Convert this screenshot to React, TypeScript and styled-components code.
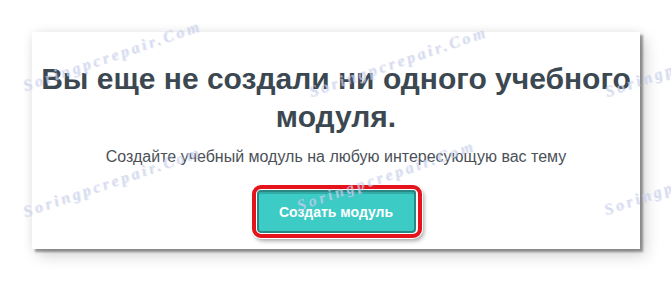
import React from 'react'
import styled, { createGlobalStyle } from 'styled-components'

const GlobalStyle = createGlobalStyle`
  html, body {
    margin: 0;
    padding: 0;
    background: #ffffff;
  }
  body {
    font-family: 'Liberation Sans', Arial, sans-serif;
  }
`

const Page = styled.div`
  position: relative;
  width: 671px;
  height: 281px;
  overflow: hidden;
  padding: 32px 0 0 32px;
  box-sizing: border-box;
`

const Card = styled.section`
  width: 608px;
  height: 217px;
  box-sizing: border-box;
  padding: 28px 0 0;
  background: #ffffff;
  display: flex;
  flex-direction: column;
  align-items: center;
  box-shadow:
    0 0 10px rgba(0, 0, 0, 0.08),
    3px 3px 2px rgba(0, 0, 0, 0.36),
    6px 7px 14px rgba(0, 0, 0, 0.16);
`

const Title = styled.h1`
  margin: 0;
  font-size: 30px;
  line-height: 38px;
  font-weight: 700;
  color: #3c4851;
  text-align: center;
`

const Subtitle = styled.p`
  margin: 11px 0 0;
  font-size: 16px;
  line-height: 20px;
  color: #4b5157;
  text-align: center;
`

// NOTE: the red frame is an annotation drawn on top of the button in the screenshot
const Highlight = styled.div`
  position: relative;
  margin-top: 22px;

  &::after {
    content: '';
    position: absolute;
    left: -5px;
    top: -4px;
    right: -6px;
    bottom: -5px;
    border: 4px solid #e5131b;
    border-radius: 9px;
    box-shadow:
      0 0 0 1px #ffffff,
      inset 0 0 0 1px #ffffff,
      2px 3px 4px rgba(0, 0, 0, 0.35);
    pointer-events: none;
  }
`

const CreateButton = styled.button`
  display: flex;
  align-items: center;
  justify-content: center;
  width: 159px;
  height: 44px;
  box-sizing: border-box;
  padding: 0;
  border: 2px solid #2a8884;
  border-top-width: 3px;
  border-radius: 4px;
  background: #3dcbc6;
  box-shadow: inset 0 2px 0 #33aca8;
  color: #ffffff;
  font-family: 'Liberation Sans', Arial, sans-serif;
  font-size: 14px;
  font-weight: 700;
  cursor: pointer;
`

const Watermark = styled.span<{ $x: number; $y: number }>`
  position: absolute;
  left: ${(p) => p.$x}px;
  top: ${(p) => p.$y}px;
  transform: rotate(-19deg);
  transform-origin: left bottom;
  font-family: 'Liberation Serif', 'DejaVu Serif', serif;
  font-style: italic;
  font-weight: 700;
  font-size: 16px;
  line-height: 16px;
  letter-spacing: 3px;
  white-space: nowrap;
  color: rgba(205, 212, 240, 0.7);
  text-shadow: 1px 1px 0 rgba(150, 160, 200, 0.2);
  pointer-events: none;
`

const marks = [
  { x: 26, y: 78 },
  { x: 312, y: 84 },
  { x: 608, y: 84 },
  { x: 26, y: 204 },
  { x: 300, y: 198 },
  { x: 607, y: 202 },
]

export default function App() {
  return (
    <Page>
      <GlobalStyle />
      <Card>
        <Title>Вы еще не создали ни одного учебного модуля.</Title>
        <Subtitle>Создайте учебный модуль на любую интересующую вас тему</Subtitle>
        <Highlight>
          <CreateButton type='button'>Создать модуль</CreateButton>
        </Highlight>
      </Card>
      {marks.map((m, i) => (
        <Watermark key={i} $x={m.x} $y={m.y}>
          Soringpcrepair.Com
        </Watermark>
      ))}
    </Page>
  )
}
